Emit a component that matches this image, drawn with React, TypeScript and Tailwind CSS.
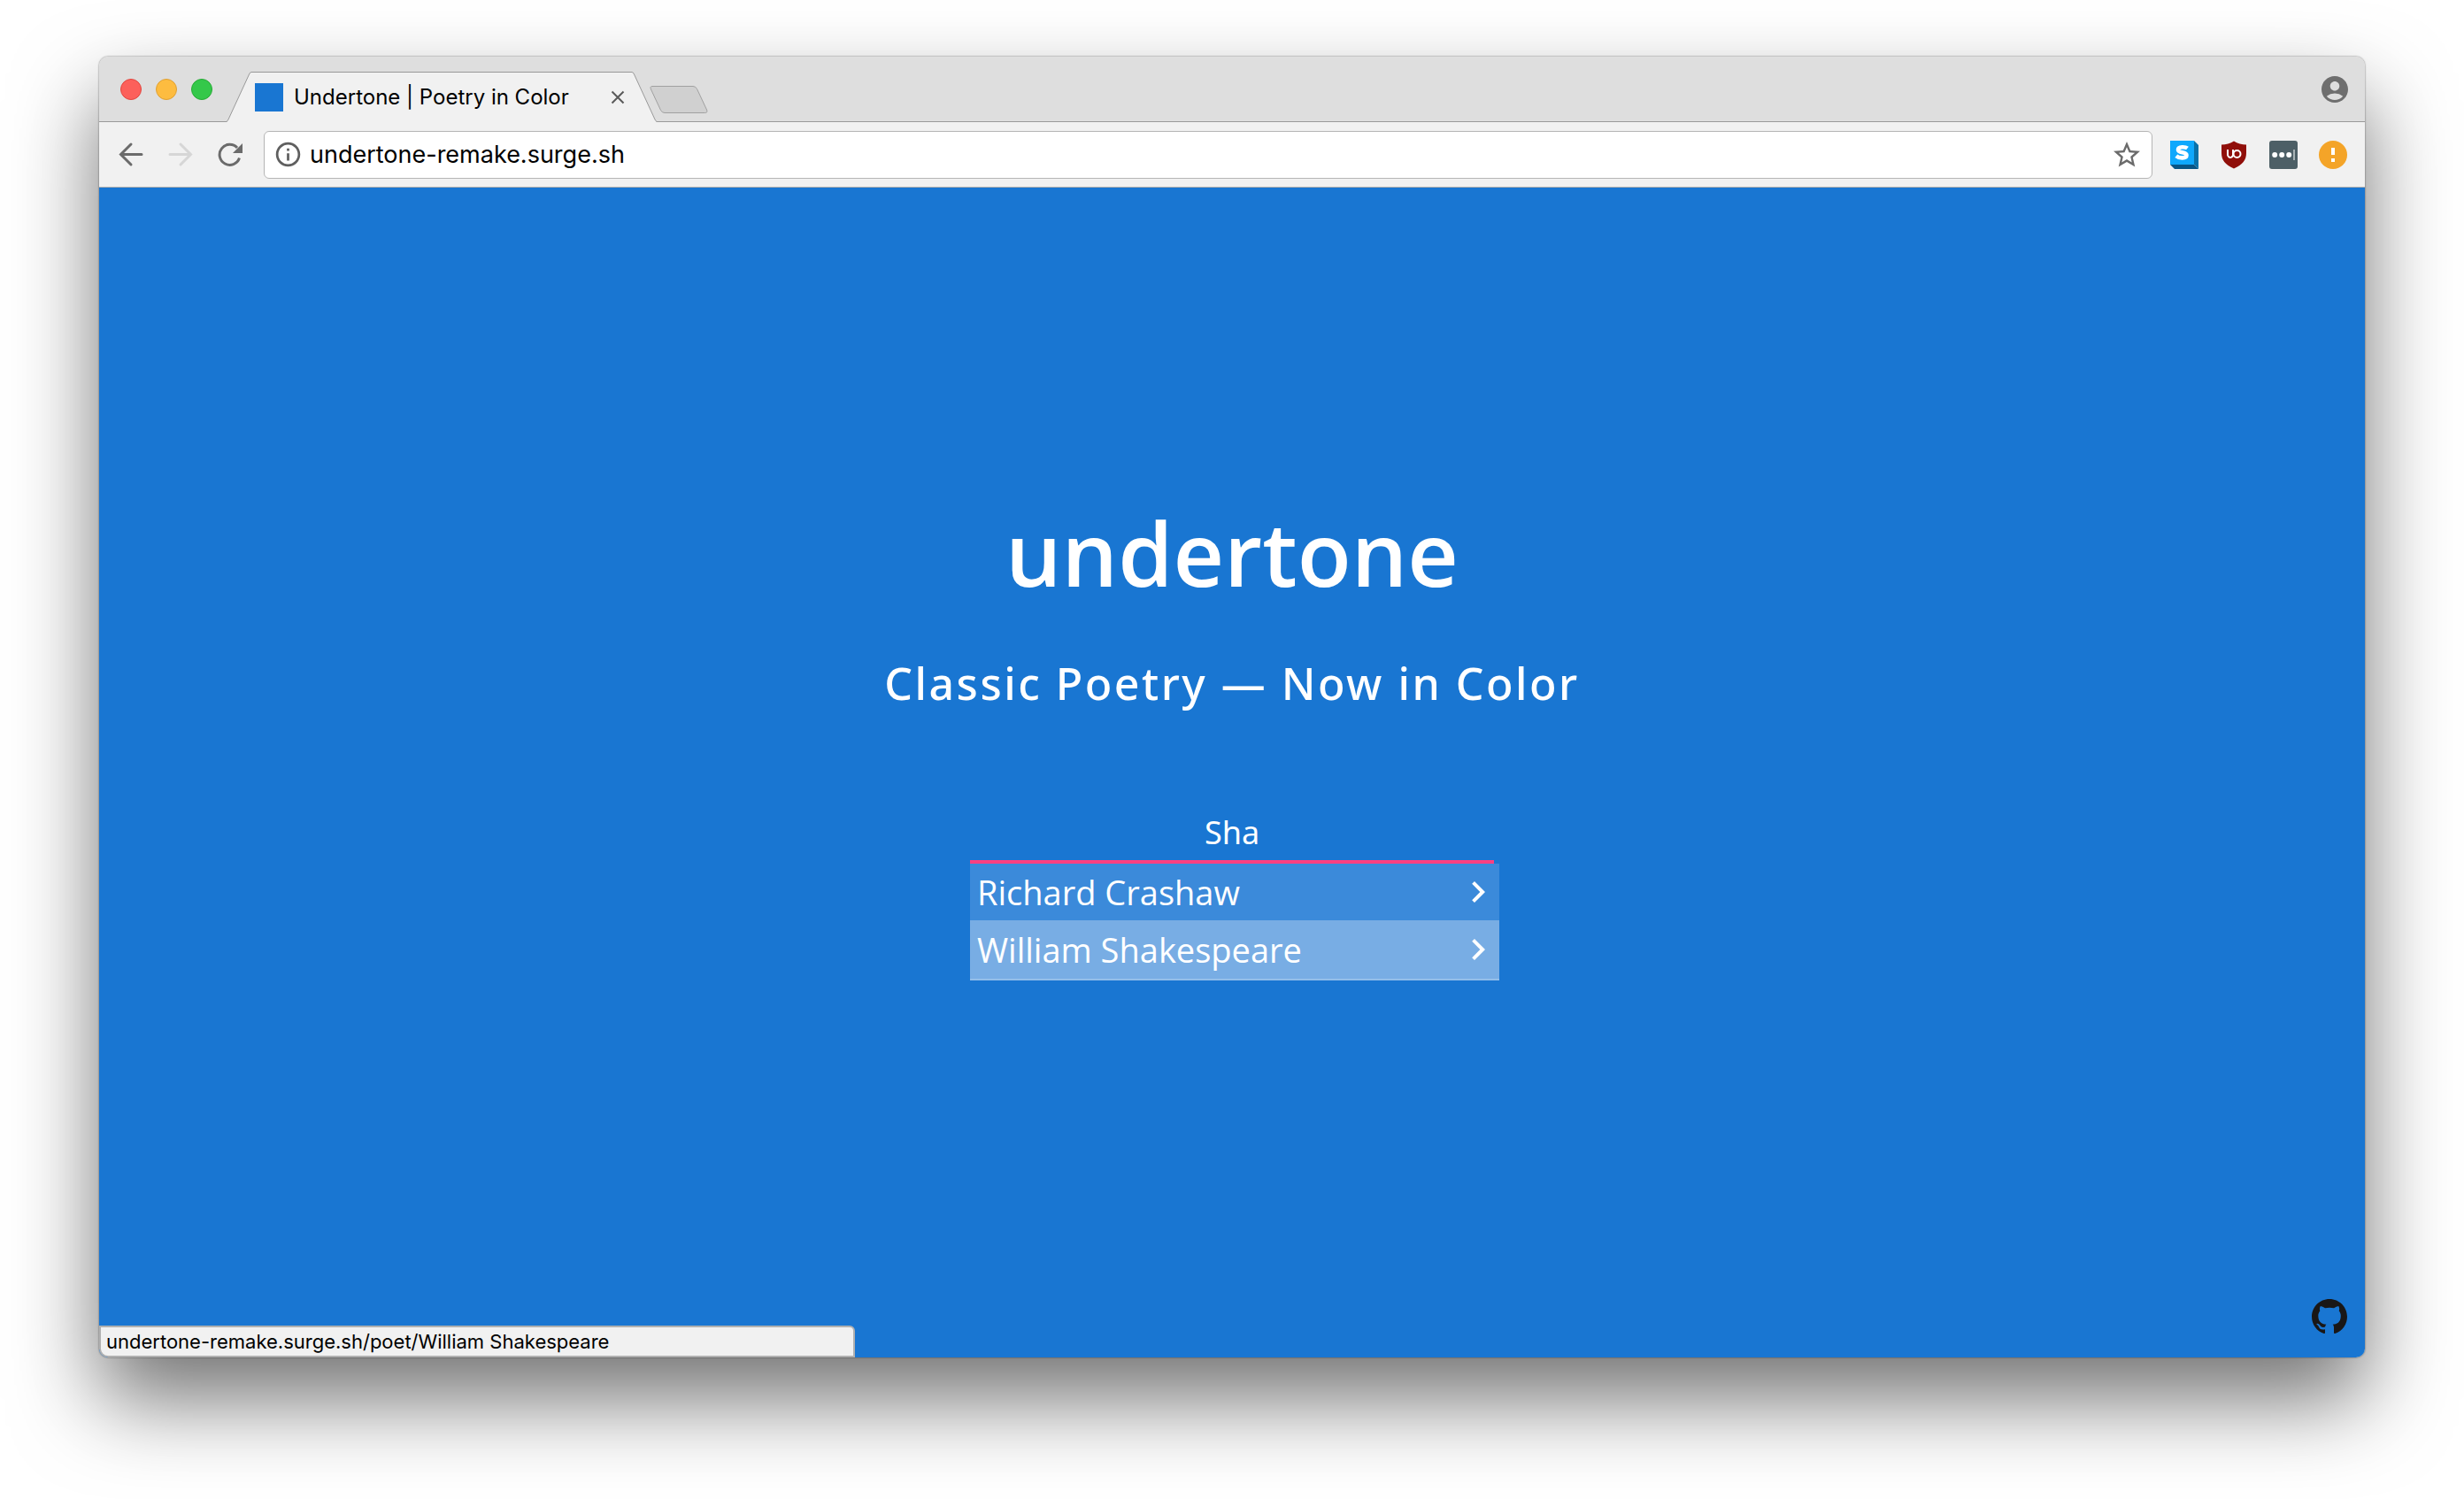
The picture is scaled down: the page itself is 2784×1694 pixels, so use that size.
import React from "react";
import { MdAccountCircle, MdStarBorder, MdInfoOutline, MdChevronRight } from "react-icons/md";

const poets = ["Richard Crashaw", "William Shakespeare"];

function TrafficLights() {
  return (
    <div className="flex gap-4 self-center pl-6 pr-4">
      <button aria-label="Close window" className="size-6 rounded-full border border-[#e2463f] bg-[#fc605b]" />
      <button aria-label="Minimize window" className="size-6 rounded-full border border-[#dfa033] bg-[#fdbc40]" />
      <button aria-label="Zoom window" className="size-6 rounded-full border border-[#27aa35] bg-[#34c84a]" />
    </div>
  );
}

function TabStrip() {
  return (
    <div className="relative flex h-[74px] items-stretch bg-[#dedede]">
      <div className="absolute inset-x-0 bottom-0 h-px bg-[#999]" />
      <TrafficLights />
      <div className="relative flex items-end">
        <svg className="h-[57px] w-7" viewBox="0 0 28 57" aria-hidden="true">
          <path d="M0 57V56.500Q1 56 2 54L25.500 3Q26.500 .5 28 .5V57Z" fill="#f1f1f1" />
          <path d="M0 56.500Q1 56 2 54L25.500 3Q26.500 .5 28 .5" fill="none" stroke="#999" />
        </svg>
        <div className="flex h-[57px] w-[430px] items-center border-t border-[#999] bg-[#f1f1f1] pl-1 pr-2">
          <span className="mr-3 size-8 bg-[#1976d2]" />
          <span className="flex-1 whitespace-nowrap text-2xl text-black">Undertone | Poetry in Color</span>
          <button aria-label="Close tab" className="flex size-4 items-center justify-center">
            <svg className="size-4" viewBox="0 0 16 16" fill="none" stroke="#5a5a5a" strokeWidth="2" aria-hidden="true">
              <path d="M1.500 1.500l13 13M14.500 1.500l-13 13" />
            </svg>
          </button>
        </div>
        <svg className="h-[57px] w-7" viewBox="0 0 28 57" aria-hidden="true">
          <path d="M28 57V56.500Q27 56 26 54L2.500 3Q1.500 .5 0 .5V57Z" fill="#f1f1f1" />
          <path d="M28 56.500Q27 56 26 54L2.500 3Q1.500 .5 0 .5" fill="none" stroke="#999" />
        </svg>
      </div>
      <button aria-label="New tab" className="-ml-2 mt-[33px] h-8 w-[66px]">
        <svg className="h-8 w-[66px]" viewBox="0 0 66 32" fill="#d0d0d0" stroke="#a0a0a0" aria-hidden="true">
          <path d="M3 .5H49Q52 .5 53.500 3.500L64.500 27Q66 30.500 62.500 30.500H17Q14 30.500 12.500 27.500L1.500 4Q0 .5 3 .5Z" />
        </svg>
      </button>
      <button aria-label="Profile" className="ml-auto mr-4 self-center text-[#6e6e6e]">
        <MdAccountCircle size={36} />
      </button>
    </div>
  );
}

function Extensions() {
  return (
    <div className="flex items-center gap-6">
      <button aria-label="Stylish" className="size-8">
        <svg viewBox="0 0 32 32" aria-hidden="true">
          <path d="M27 0L32 5V32L27 27Z" fill="#0a71a8" />
          <path d="M0 27H27L32 32H5Z" fill="#085585" />
          <path d="M0 0H27V27H0Z" fill="#0fa8fc" />
          <path d="M19.500 8.500C17.500 7 9 6 9 10.200C9 14.400 18.500 12 18.500 16.200C18.500 20.500 10 20 6.800 17.300" fill="none" stroke="#fff" strokeWidth="4.600" />
        </svg>
      </button>
      <button aria-label="Content blocker" className="size-8">
        <svg viewBox="0 0 32 32" aria-hidden="true">
          <path d="M16 .5C12 3 7 4.500 2 4.500V14C2 22 6 27 16 31.500C26 27 30 22 30 14V4.500C25 4.500 20 3 16 .5Z" fill="#900f0a" />
          <g fill="none" stroke="#fff" strokeWidth="2">
            <path d="M9 10v5.500a3 3 0 0 0 4.500 3Q15.500 17.500 15 14.500V10" />
            <circle cx="19.500" cy="15" r="4" />
          </g>
        </svg>
      </button>
      <button aria-label="Password manager" className="size-8">
        <svg viewBox="0 0 32 32" aria-hidden="true">
          <rect width="32" height="32" rx="3" fill="#4d5f66" />
          <g fill="#fff">
            <circle cx="6.200" cy="16" r="3" />
            <circle cx="14.200" cy="16" r="3" />
            <circle cx="22.200" cy="16" r="3" />
          </g>
          <path d="M28 10v12" stroke="#c8cfd2" strokeWidth="1.500" />
        </svg>
      </button>
      <button aria-label="Alerts" className="size-8">
        <svg viewBox="0 0 32 32" aria-hidden="true">
          <circle cx="16" cy="16" r="16" fill="#f4a428" />
          <path d="M14 8h4v8h-4zM14 20h4v4h-4z" fill="#fff" />
        </svg>
      </button>
    </div>
  );
}

function Toolbar() {
  return (
    <div className="flex h-[74px] items-center border-b border-[#b0b0b0] bg-[#f1f1f1] pl-[18px] pr-5">
      <nav className="mr-5 flex items-center gap-5 text-[#6b6b6b]">
        <button aria-label="Back" className="size-9">
          <svg viewBox="0 0 36 36" fill="none" stroke="currentColor" strokeWidth="3" strokeLinecap="round" aria-hidden="true">
            <path d="M30 17.500H7M18 6L6.500 17.500L18 29" />
          </svg>
        </button>
        <button aria-label="Forward" className="size-9 text-[#d6d6d6]" disabled>
          <svg viewBox="0 0 36 36" fill="none" stroke="currentColor" strokeWidth="3" strokeLinecap="round" aria-hidden="true">
            <path d="M6 17.500H29M18 6L29.500 17.500L18 29" />
          </svg>
        </button>
        <button aria-label="Reload" className="size-9">
          <svg viewBox="0 0 36 36" fill="none" stroke="currentColor" strokeWidth="3" aria-hidden="true">
            <path d="M28.500 21.500A11.500 11.500 0 1 1 26 10" />
            <path d="M32 5V16H21Z" fill="currentColor" stroke="none" />
          </svg>
        </button>
      </nav>
      <div className="mr-5 flex h-[54px] flex-1 items-center rounded-md border border-[#b5b5b5] bg-white px-[10px]">
        <MdInfoOutline size={33} className="mr-2 text-[#5f5f5f]" />
        <input
          aria-label="Address"
          defaultValue="undertone-remake.surge.sh"
          className="min-w-0 flex-1 bg-transparent text-[27px] leading-9 text-black outline-none"
        />
        <button aria-label="Bookmark this page" className="text-[#6b6b6b]">
          <MdStarBorder size={36} />
        </button>
      </div>
      <Extensions />
    </div>
  );
}

function PoetSearch() {
  return (
    <div className="relative mt-[94px] w-[592px]">
      <input
        aria-label="Search poets"
        defaultValue="Sha"
        className="block h-[76px] w-full border-b-4 border-[#ff4081] bg-transparent pt-2 text-center text-4xl text-white outline-none"
      />
      <ul className="absolute left-0 top-full w-[598px]">
        {poets.map((poet, i) => (
          <li key={poet}>
            <a
              href={"#" + poet}
              className={
                i === 1
                  ? "flex h-[68px] items-center justify-between border-b-2 border-[#93beea] bg-[#78ade4] pl-2"
                  : "flex h-16 items-center justify-between bg-[#3b8ada] pl-2"
              }
            >
              <span className="font-['Open_Sans',sans-serif] text-[38px] font-medium leading-none">{poet}</span>
              <MdChevronRight size={48} />
            </a>
          </li>
        ))}
      </ul>
    </div>
  );
}

export default function App() {
  return (
    <div className="flex min-h-screen flex-col bg-white px-28 pt-16 pb-40 font-['Inter',sans-serif]">
      <div className="flex flex-1 flex-col overflow-hidden rounded-[10px] shadow-[0_0_2px_rgba(0,0,0,0.6),0_48px_96px_rgba(0,0,0,0.55)]">
        <TabStrip />
        <Toolbar />
        <main className="relative flex flex-1 flex-col items-center bg-[#1976d2] pt-[344px] font-['Noto_Sans',sans-serif] text-white">
          <h1 className="font-['Open_Sans',sans-serif] text-[100px] font-semibold leading-[136px]">undertone</h1>
          <h2 className="mt-[46px] text-[50px] font-medium leading-[68px] tracking-wider">Classic Poetry — Now in Color</h2>
          <PoetSearch />
          <a href="#github" aria-label="GitHub" className="absolute bottom-[26px] right-5 text-[#191717]">
            <svg className="size-10" viewBox="0 0 16 16" fill="currentColor" aria-hidden="true">
              <path d="M8 0C3.580 0 0 3.580 0 8c0 3.540 2.290 6.530 5.470 7.590.4.070.55-.17.55-.38 0-.19-.01-.82-.01-1.490-2.010.37-2.530-.49-2.690-.94-.09-.23-.48-.94-.82-1.130-.28-.15-.68-.52-.01-.53.63-.01 1.080.58 1.230.82.72 1.210 1.870.87 2.330.66.07-.52.28-.87.51-1.070-1.780-.2-3.640-.89-3.640-3.950 0-.87.31-1.590.82-2.150-.08-.2-.36-1.020.08-2.120 0 0 .67-.21 2.200.82.64-.18 1.320-.27 2-.27s1.360.09 2 .27c1.530-1.040 2.200-.82 2.200-.82.44 1.100.16 1.920.08 2.120.51.56.82 1.270.82 2.150 0 3.070-1.870 3.750-3.650 3.950.29.25.54.73.54 1.480 0 1.070-.01 1.930-.01 2.200 0 .21.15.46.55.38A8.010 8.010 0 0 0 16 8c0-4.420-3.580-8-8-8z" />
            </svg>
          </a>
          <div className="absolute bottom-0 left-0 w-[854px] rounded-tr-md rounded-bl-[10px] border-2 border-[#b0b0b0] bg-[#f1f1f1] pl-[6px] font-['Inter',sans-serif] text-[22px] leading-8 text-black">
            undertone-remake.surge.sh/poet/William Shakespeare
          </div>
        </main>
      </div>
    </div>
  );
}
